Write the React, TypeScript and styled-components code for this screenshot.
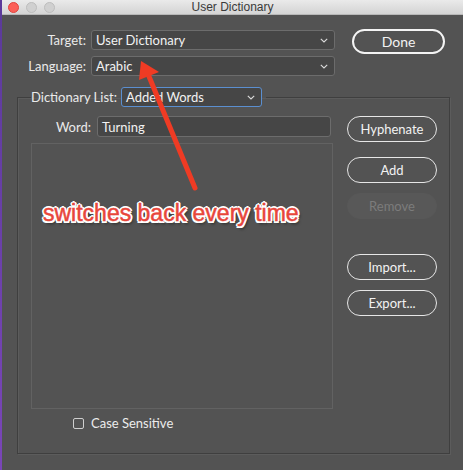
import React from "react";
import styled, { createGlobalStyle } from "styled-components";

const Global = createGlobalStyle`
  html, body { margin: 0; padding: 0; background: #535353; }
  body { font-family: "Lato", "Noto Sans", sans-serif; font-size: 13px; color: #ececec; }
  * { box-sizing: border-box; }
`;

const Page = styled.div`
  position: relative;
  display: flex;
  width: 463px;
  height: 470px;
  overflow: hidden;
`;

const Strip = styled.div`
  width: 2px;
  flex: none;
  background: linear-gradient(#5b3a9a, #7a46b8);
`;

const Window = styled.div`
  flex: 1;
  display: flex;
  flex-direction: column;
  background: #535353;
`;

const TitleBar = styled.div`
  position: relative;
  height: 15px;
  flex: none;
  display: flex;
  align-items: center;
  justify-content: center;
  background: linear-gradient(#eaeaea, #d4d4d4);
  border-bottom: 1px solid #b8b8b8;
  color: #3a3a3a;
  font-family: "Liberation Sans", sans-serif;
  font-size: 12px;
`;

const Lights = styled.div`
  position: absolute;
  left: 6px;
  top: 2px;
  display: flex;
  gap: 7px;
`;

const Light = styled.span<{ $c: string; $b: string }>`
  width: 11px;
  height: 11px;
  border-radius: 50%;
  background: ${(p) => p.$c};
  border: 1px solid ${(p) => p.$b};
`;

const Body = styled.div`
  position: relative;
  flex: 1;
  display: flex;
  flex-direction: column;
`;

const TopArea = styled.div`
  display: flex;
  align-items: flex-start;
  padding-top: 15px;
`;

const FormGrid = styled.div`
  display: grid;
  grid-template-columns: 84px 244px;
  column-gap: 5px;
  row-gap: 6px;
  align-items: center;
`;

const Label = styled.div`
  text-align: right;
  color: #eaeaea;
  white-space: nowrap;
`;

const Select = styled.div<{ $focus?: boolean; $w?: number }>`
  height: 20px;
  width: ${(p) => (p.$w ? `${p.$w}px` : "auto")};
  display: flex;
  align-items: center;
  justify-content: space-between;
  padding: 0 6px 0 4px;
  background: #464646;
  border: 1px solid ${(p) => (p.$focus ? "#5b8fd0" : "#6c6c6c")};
  border-radius: 3px;
  color: #f2f2f2;
  white-space: nowrap;
`;

const Input = styled.div`
  height: 21px;
  width: 234px;
  display: flex;
  align-items: center;
  padding: 0 4px;
  background: #464646;
  border: 1px solid #6c6c6c;
  border-radius: 3px;
  color: #f2f2f2;
`;

const PillButton = styled.div<{ $disabled?: boolean; $mt?: number; $w?: number; $h?: number; $strong?: boolean }>`
  width: ${(p) => p.$w ?? 90}px;
  height: ${(p) => p.$h ?? 26}px;
  margin-top: ${(p) => p.$mt ?? 0}px;
  display: flex;
  align-items: center;
  justify-content: center;
  border-radius: 14px;
  border: ${(p) =>
    p.$disabled ? "1px solid #585858" : p.$strong ? "2px solid #f4f4f4" : "1px solid #e6e6e6"};
  background: ${(p) => (p.$disabled ? "#585858" : "transparent")};
  color: ${(p) => (p.$disabled ? "#7c7c7c" : "#f2f2f2")};
  font-size: ${(p) => (p.$strong ? 14 : 13)}px;
`;

const DoneWrap = styled.div`
  margin-left: 17px;
  margin-top: -1px;
`;

const Group = styled.fieldset`
  margin: 11px 0 0 15px;
  width: 433px;
  height: 367px;
  padding: 0 0 0 13px;
  border: 1px solid #3f3f3f;
  box-shadow: inset 1px 1px 0 #5c5c5c, 1px 1px 0 #5c5c5c;
  display: grid;
  grid-template-columns: 302px 90px;
  column-gap: 14px;
  align-items: start;
`;

const Legend = styled.legend`
  padding: 0 4px 0 0;
  margin-left: 0;
  display: flex;
  align-items: center;
  gap: 4px;
`;

const LeftCol = styled.div`
  display: flex;
  flex-direction: column;
  padding-top: 9px;
`;

const WordRow = styled.div`
  display: flex;
  align-items: center;
  gap: 6px;
`;

const WordLabel = styled(Label)`
  width: 60px;
`;

const ListBox = styled.div`
  margin-top: 6px;
  height: 266px;
  border: 1px solid #626262;
  background: #535353;
`;

const CheckRow = styled.div`
  display: flex;
  align-items: center;
  gap: 7px;
  margin: 6px 0 0 42px;
`;

const Box = styled.span`
  width: 11px;
  height: 11px;
  border: 1px solid #cfcfcf;
  border-radius: 2px;
`;

const RightCol = styled.div`
  display: flex;
  flex-direction: column;
  padding-top: 9px;
`;

const Note = styled.div`
  position: absolute;
  left: 41px;
  top: 185px;
  font-family: "Liberation Sans", sans-serif;
  font-size: 23px;
  color: #e8463b;
  -webkit-text-stroke: 0.5px #e8463b;
  white-space: nowrap;
  text-shadow:
    -2px 0 0 #fff, 2px 0 0 #fff, 0 -2px 0 #fff, 0 2px 0 #fff,
    -1.5px -1.5px 0 #fff, 1.5px -1.5px 0 #fff, -1.5px 1.5px 0 #fff, 1.5px 1.5px 0 #fff,
    2px 3px 3px rgba(0,0,0,0.6);
`;

const ArrowSvg = styled.svg`
  position: absolute;
  left: 0;
  top: 0;
  pointer-events: none;
`;

const Chevron = () => (
  <svg width="8" height="5" viewBox="0 0 8 5">
    <path d="M0.8 0.8 L4 4 L7.2 0.8" fill="none" stroke="#dcdcdc" strokeWidth="1.1" />
  </svg>
);

export default function App() {
  return (
    <>
      <Global />
      <Page>
        <Strip />
        <Window>
          <TitleBar>
            <Lights>
              <Light $c="#fc5f57" $b="#e0443e" />
              <Light $c="#d0d0d0" $b="#bdbdbd" />
              <Light $c="#d0d0d0" $b="#bdbdbd" />
            </Lights>
            User Dictionary
          </TitleBar>
          <Body>
            <TopArea>
              <FormGrid>
                <Label>Target:</Label>
                <Select>
                  User Dictionary <Chevron />
                </Select>
                <Label>Language:</Label>
                <Select>
                  Arabic <Chevron />
                </Select>
              </FormGrid>
              <DoneWrap>
                <PillButton $strong $w={93} $h={25}>Done</PillButton>
              </DoneWrap>
            </TopArea>
            <Group>
              <Legend>
                <Label>Dictionary List:</Label>
                <Select $focus $w={141}>
                  Added Words <Chevron />
                </Select>
              </Legend>
              <LeftCol>
                <WordRow>
                  <WordLabel>Word:</WordLabel>
                  <Input>Turning</Input>
                </WordRow>
                <ListBox />
                <CheckRow>
                  <Box />
                  Case Sensitive
                </CheckRow>
              </LeftCol>
              <RightCol>
                <PillButton>Hyphenate</PillButton>
                <PillButton $mt={15}>Add</PillButton>
                <PillButton $mt={10} $disabled>Remove</PillButton>
                <PillButton $mt={35}>Import...</PillButton>
                <PillButton $mt={10}>Export...</PillButton>
              </RightCol>
            </Group>
            <Note>switches back every time</Note>
          </Body>
        </Window>
        <ArrowSvg width="463" height="470" viewBox="0 0 463 470">
          <line x1="195" y1="188" x2="148" y2="74" stroke="#ef3b24" strokeWidth="5" strokeLinecap="round" />
          <polygon points="141,61 139,80 159,72" fill="#ef3b24" />
        </ArrowSvg>
      </Page>
    </>
  );
}
